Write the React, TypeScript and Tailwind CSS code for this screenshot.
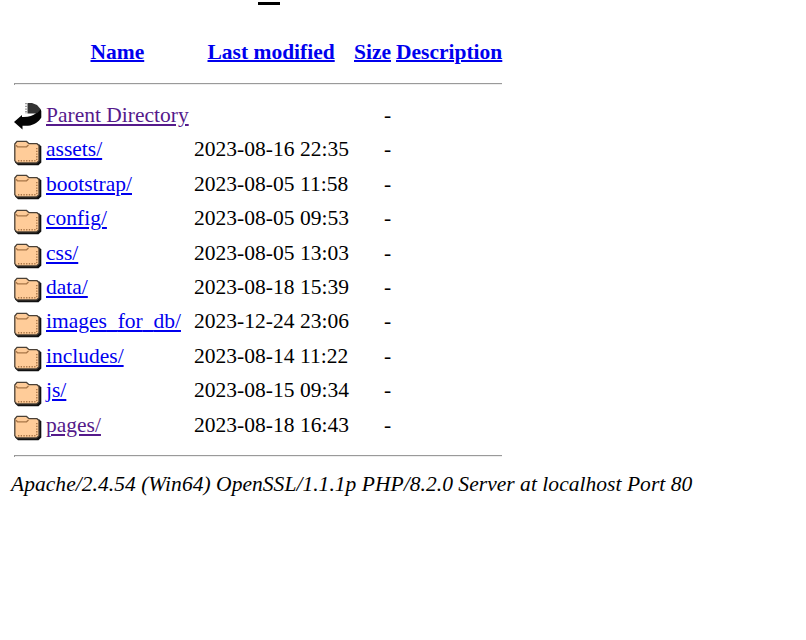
type Entry = { name: string; modified: string; parent?: boolean; visited?: boolean };

const entries: Entry[] = [
  { name: "Parent Directory", modified: "", parent: true, visited: true },
  { name: "assets/", modified: "2023-08-16 22:35" },
  { name: "bootstrap/", modified: "2023-08-05 11:58" },
  { name: "config/", modified: "2023-08-05 09:53" },
  { name: "css/", modified: "2023-08-05 13:03" },
  { name: "data/", modified: "2023-08-18 15:39" },
  { name: "images_for_db/", modified: "2023-12-24 23:06" },
  { name: "includes/", modified: "2023-08-14 11:22" },
  { name: "js/", modified: "2023-08-15 09:34" },
  { name: "pages/", modified: "2023-08-18 16:43", visited: true },
];

function FolderIcon() {
  return (
    <svg className="mt-[7.5px] h-[27px] w-[28px] shrink-0" viewBox="0 0 28 27">
      <path d="M3 4.5H25.5L27.3 6.5V22.5L24.5 25.3H4L1 22.5Z" fill="#111" />
      <path d="M.8 4 3 1.4H12.5L15 3.7H23L25 5.6V20.8L22.5 22.9H2.8L.8 20.8Z" fill="#ffcc99" stroke="#4a4036" strokeWidth="1.3" />
      <path d="M2 5.3 3.5 6.8H12.5L14.5 5" fill="none" stroke="#a87547" strokeWidth="1.3" />
      <path d="M4 20.8H23M22.8 8V20" fill="none" stroke="#a87547" strokeWidth="1.4" strokeDasharray="1.3 1.4" />
    </svg>
  );
}

function BackIcon() {
  return (
    <svg className="mt-[4px] h-[28px] w-[28px] shrink-0" viewBox="0 0 28 28">
      <path d="M13.5 1H18L23 3 26.5 7V9.5L22 11.5H13.5Z" fill="#333" />
      <path d="M12 1V12" stroke="#888" strokeDasharray="1.3 1.4" strokeWidth="1.6" />
      <path d="M0 20 8 13V15C14 15.5 19 13.5 22 11.3 25 10 26 8.5 26.5 7L27.3 9V15.5C25 19.8 20 23 14 23.8H8.5V27.5Z" fill="#050505" />
    </svg>
  );
}

function Rule() {
  return <hr className="ml-[14px] h-[2px] w-[488px] border-0 border-t border-l border-t-[#9a9a9a] border-l-[#9a9a9a] bg-[#eeeeee]" />;
}

// Underscores keep an unbroken underline; descenders still interrupt it.
function FileName({ name }: { name: string }) {
  return name.split(/(_)/).map((part, i) =>
    part === "_" ? (
      <span key={i} className="[text-decoration-skip-ink:none]">{part}</span>
    ) : (
      part
    ),
  );
}

export default function App() {
  return (
    <main className="flex h-[640px] w-full flex-col overflow-hidden bg-white font-['Liberation_Serif',serif] text-[21.5px] whitespace-nowrap text-black">
      <div className="mt-[2px] ml-[257.5px] h-[3px] w-[22.5px] shrink-0 bg-black" />
      <div className="mt-[30px] ml-[14px] grid h-[48px] shrink-0 grid-cols-[76.5px_117px_146.5px_42px_106px] leading-[34.4px] font-bold text-[#0000ee]">
        <span />
        <a className="underline decoration-2">Name</a>
        <a className="underline decoration-2">Last modified</a>
        <a className="underline decoration-2">Size</a>
        <a className="underline decoration-2">Description</a>
      </div>
      <Rule />
      <div className="mt-[13px] ml-[14px] shrink-0">
        {entries.map((entry) => (
          <div key={entry.name} className="grid h-[34.4px] grid-cols-[32px_148px_190px_20px] leading-[34.4px]">
            {entry.parent ? <BackIcon /> : <FolderIcon />}
            <a className={entry.visited ? "justify-self-start text-[#551a8b] underline" : "justify-self-start text-[#0000ee] underline"}>
              <FileName name={entry.name} />
            </a>
            <span className="tracking-[0.03px]">{entry.modified}</span>
            <span>-</span>
          </div>
        ))}
      </div>
      <div className="mt-[13px]">
        <Rule />
      </div>
      <address className="mt-[10.5px] ml-[11px] leading-[34.4px] tracking-[0.04px] italic">
        Apache/2.4.54 (Win64) OpenSSL/1.1.1p PHP/8.2.0 Server at localhost Port 80
      </address>
    </main>
  );
}
